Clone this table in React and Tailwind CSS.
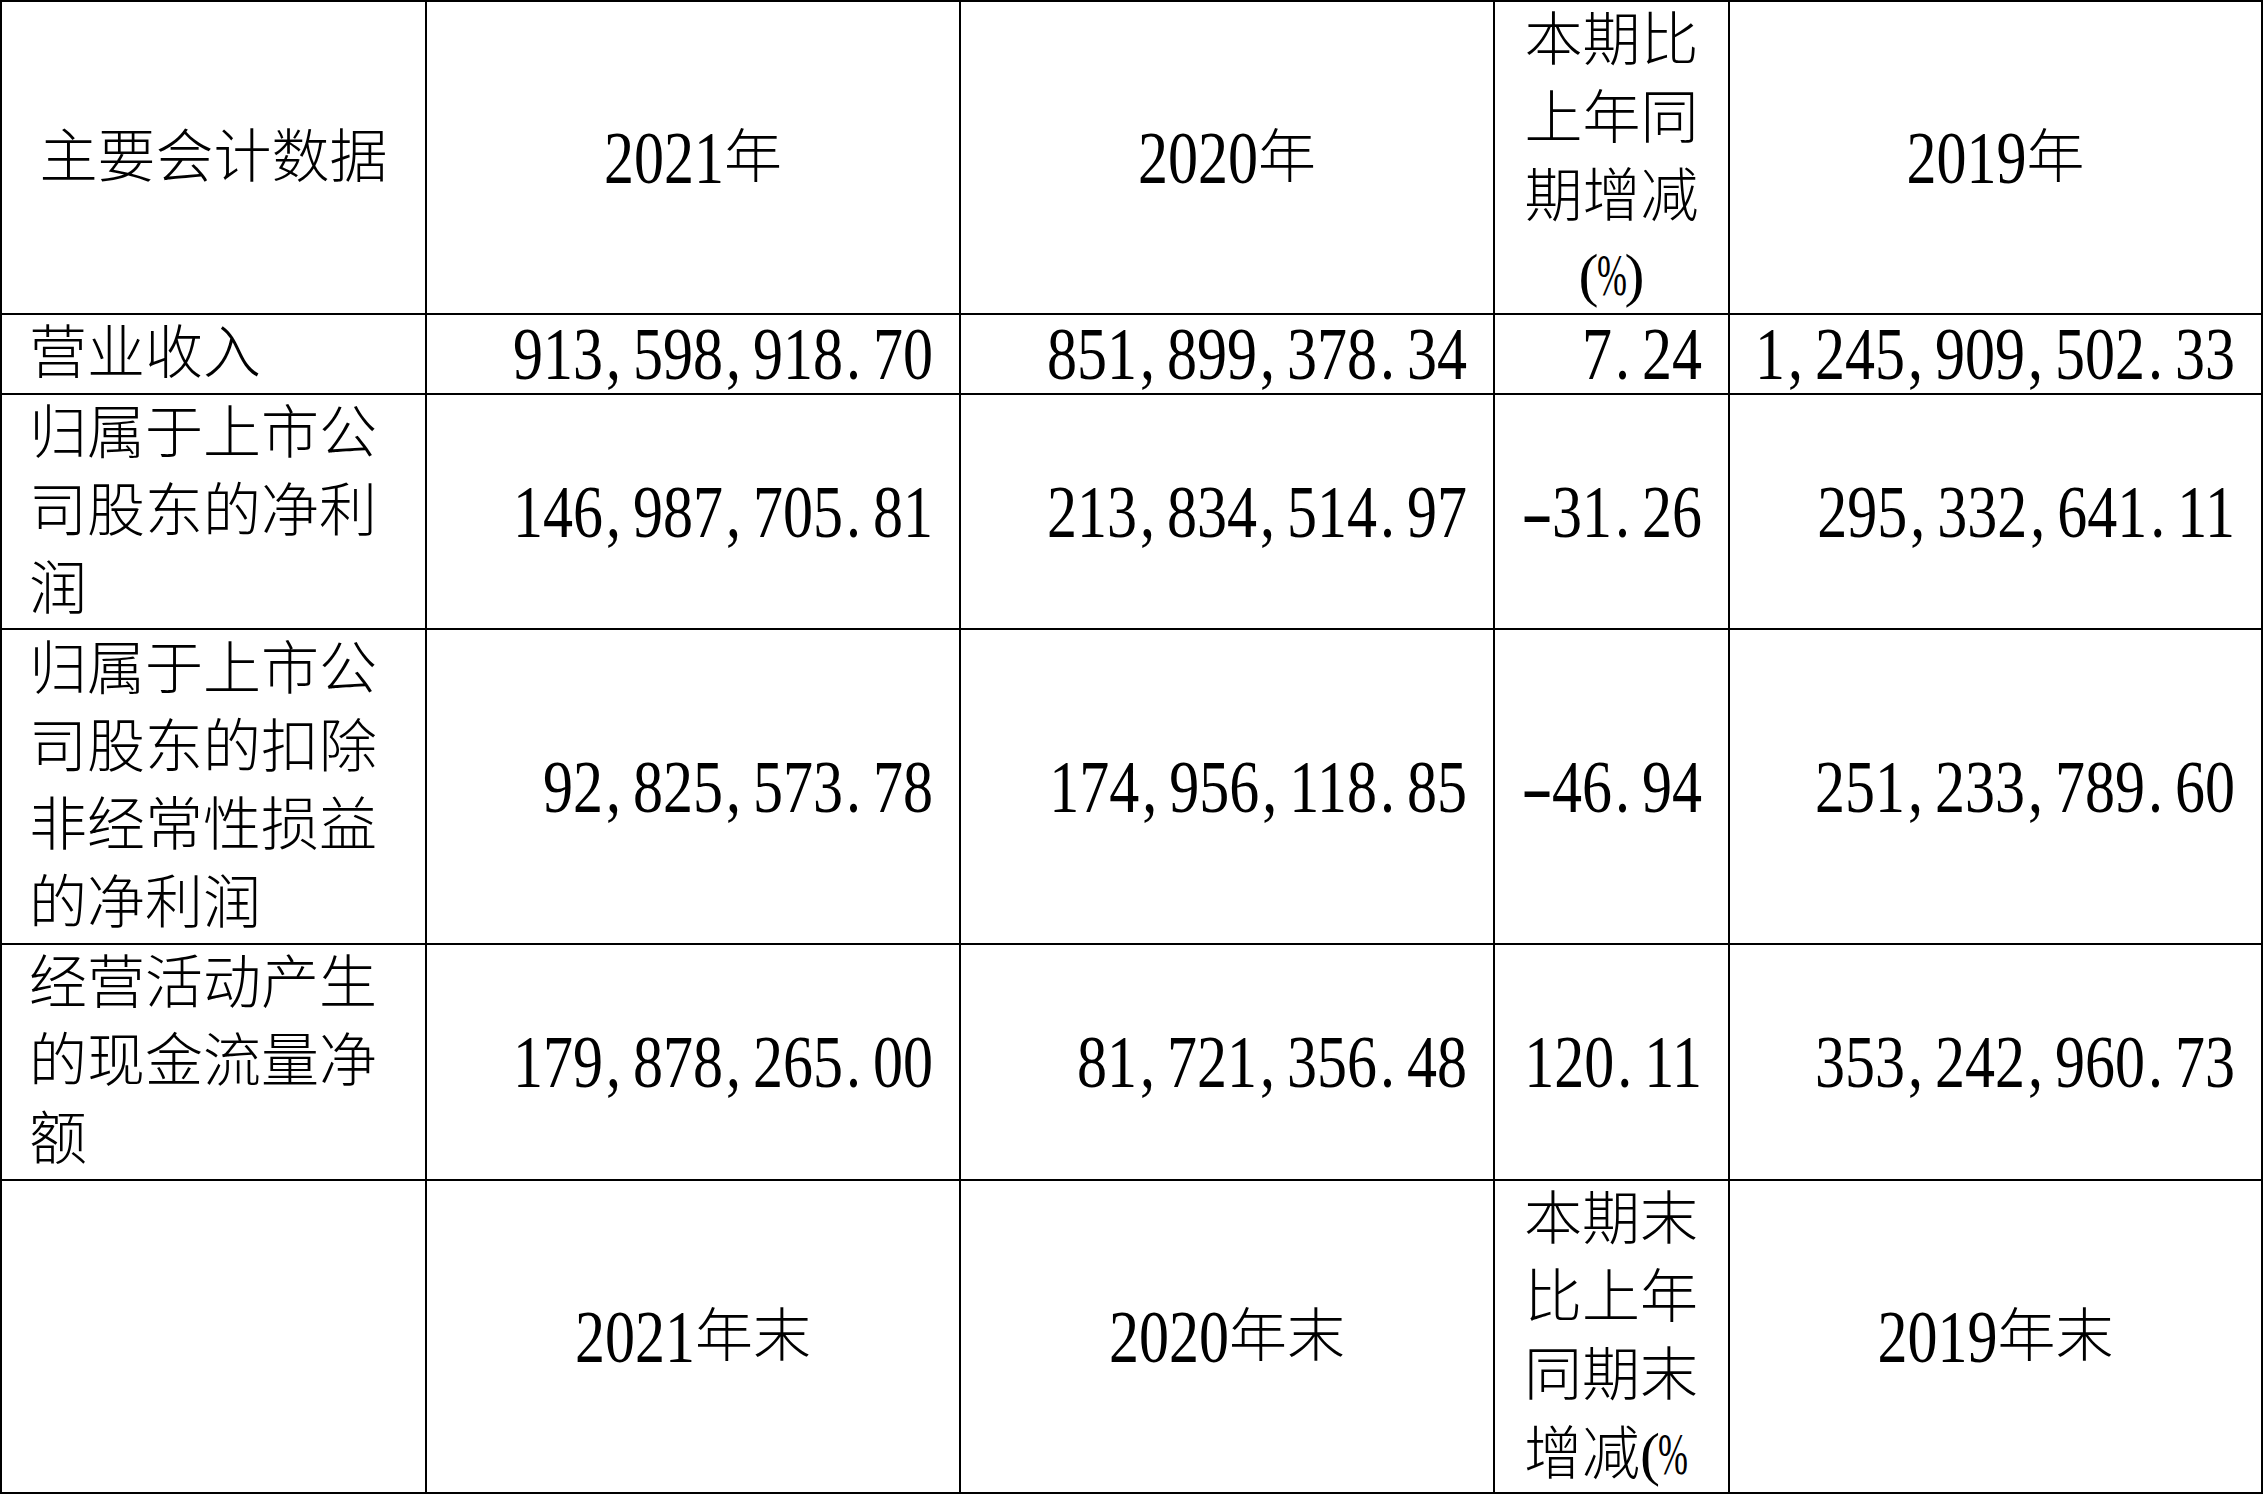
import React from 'react';

const rows = [
    ['营业收入', '913,598,918.70', '851,899,378.34', '7.24', '1,245,909,502.33'],
    ['归属于上市公司股东的净利润', '146,987,705.81', '213,834,514.97', '-31.26', '295,332,641.11'],
    ['归属于上市公司股东的扣除非经常性损益的净利润', '92,825,573.78', '174,956,118.85', '-46.94', '251,233,789.60'],
    ['经营活动产生的现金流量净额', '179,878,265.00', '81,721,356.48', '120.11', '353,242,960.73'],
];

// half-width chars are drawn in 30px cells, digits stretched to look like the song-style numerals
function Num({ v, tall = true }) {
    return (
        <span className={`inline-block text-[60px] ${tall ? 'scale-y-[1.24]' : ''}`}>
            {v.split('').map((c, i) => {
                if (/[0-9]/.test(c)) return <span key={i}>{c}</span>;
                if (c === ',' || c === '.') return <span key={i} className="inline-block w-[30px] pl-[3px] text-left">{c}</span>;
                if (c === '-') return (
                    <span key={i} className="inline-flex w-[30px] justify-center">
                        <span className="inline-block scale-x-[1.6]">-</span>
                    </span>
                );
                if (c === '%') return (
                    <span key={i} className="inline-flex w-[26px] justify-center">
                        <span className="inline-block scale-x-[0.6]">%</span>
                    </span>
                );
                if (c === '(' || c === ')') return <span key={i} className="inline-block w-[20px] text-center">{c}</span>;
                return <span key={i}>{c}</span>;
            })}
        </span>
    );
}

function Mixed({ text }) {
    const parts = text.match(/[\x00-\x7f]+|[^\x00-\x7f]+/g) || [];
    return parts.map((p, i) => {
        if (/^[\x00-\x7f]/.test(p)) {
            const tall = !/[()%]/.test(p);
            return <Num key={i} v={p} tall={tall} />;
        }
        return <span key={i}>{p}</span>;
    });
}

function Cell({ children, className = '' }) {
    return <div className={`bg-white overflow-hidden flex ${className}`}>{children}</div>;
}

function Lines({ lines, align = 'text-center' }) {
    return (
        <div className={align}>
            {lines.map((l, i) => (
                <div key={i} className="whitespace-nowrap"><Mixed text={l} /></div>
            ))}
        </div>
    );
}

export default function App() {
    return (
        <div className="w-[2263px] h-[1494px] bg-black p-[2px] grid grid-cols-[423px_532px_532px_233px_531px] grid-rows-[311px_78px_233px_313px_234px_311px] gap-[2px] font-['Liberation_Serif','Noto_Sans_CJK_SC',serif] font-light text-[58px] leading-[78px] text-black">
            {/* header */}
            <Cell className="items-center justify-center">主要会计数据</Cell>
            <Cell className="items-center justify-center"><Mixed text="2021年" /></Cell>
            <Cell className="items-center justify-center"><Mixed text="2020年" /></Cell>
            <Cell className="items-start justify-center">
                <Lines lines={['本期比', '上年同', '期增减', '(%)']} />
            </Cell>
            <Cell className="items-center justify-center"><Mixed text="2019年" /></Cell>

            {rows.map((r, i) => (
                <React.Fragment key={i}>
                    <Cell className="items-center pl-[27px]">
                        <div className="w-[352px]">{r[0]}</div>
                    </Cell>
                    {r.slice(1).map((v, j) => (
                        <Cell key={j} className="items-center justify-end pr-[26px] whitespace-nowrap">
                            <Num v={v} />
                        </Cell>
                    ))}
                </React.Fragment>
            ))}

            {/* period-end header */}
            <Cell />
            <Cell className="items-center justify-center"><Mixed text="2021年末" /></Cell>
            <Cell className="items-center justify-center"><Mixed text="2020年末" /></Cell>
            <Cell className="items-start justify-start pl-[29px]">
                <Lines lines={['本期末', '比上年', '同期末', '增减(%', ')']} align="text-left" />
            </Cell>
            <Cell className="items-center justify-center"><Mixed text="2019年末" /></Cell>
        </div>
    );
}
